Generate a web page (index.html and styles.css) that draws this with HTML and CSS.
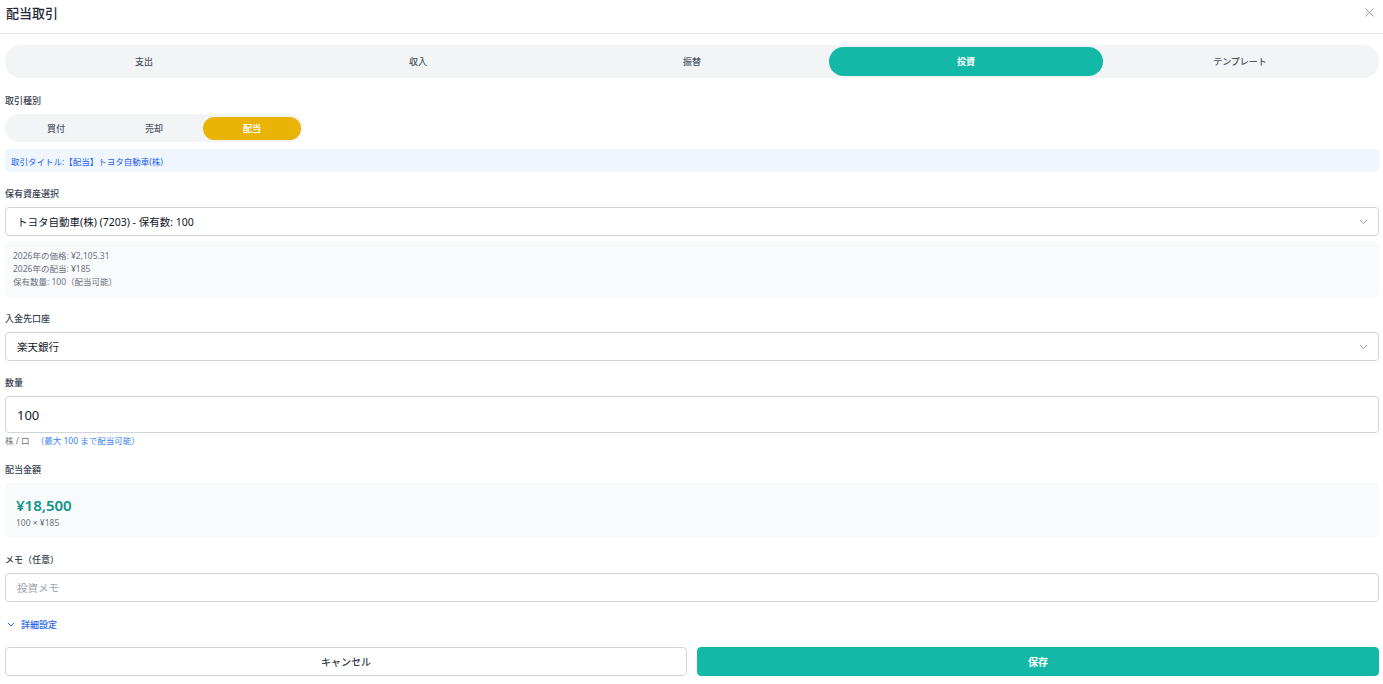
FILE: index.html
```html
<!DOCTYPE html>
<html lang="ja">
<head>
<meta charset="utf-8">
<title>配当取引</title>
<link rel="stylesheet" href="styles.css">
</head>
<body>
<div class="modal">
  <header class="modal-header">
    <h1 class="modal-title">配当取引</h1>
    <button class="close-btn" aria-label="閉じる">
      <svg width="9" height="9" viewBox="0 0 9 9"><path d="M0.5 0.5L8.5 8.5M8.5 0.5L0.5 8.5" stroke="#9ca3af" stroke-width="1" fill="none"/></svg>
    </button>
  </header>
  <div class="body">
    <nav class="tabs">
      <div class="tab">支出</div>
      <div class="tab">収入</div>
      <div class="tab">振替</div>
      <div class="tab active">投資</div>
      <div class="tab">テンプレート</div>
    </nav>

    <div class="field field-first">
      <div class="label">取引種別</div>
      <div class="subtabs">
        <div class="subtab">買付</div>
        <div class="subtab">売却</div>
        <div class="subtab active">配当</div>
      </div>
    </div>

    <div class="title-bar">取引タイトル:【配当】トヨタ自動車(株)</div>

    <div class="field">
      <div class="label">保有資産選択</div>
      <div class="select">
        <span>トヨタ自動車(株) (7203) - 保有数: 100</span>
        <svg class="chev" width="9" height="6" viewBox="0 0 9 6"><path d="M1 1L4.5 4.5L8 1" stroke="#9ca3af" stroke-width="1" fill="none"/></svg>
      </div>
      <div class="info-box">
        <div>2026年の価格: ¥2,105.31</div>
        <div>2026年の配当: ¥185</div>
        <div>保有数量: 100（配当可能）</div>
      </div>
    </div>

    <div class="field">
      <div class="label">入金先口座</div>
      <div class="select">
        <span>楽天銀行</span>
        <svg class="chev" width="9" height="6" viewBox="0 0 9 6"><path d="M1 1L4.5 4.5L8 1" stroke="#9ca3af" stroke-width="1" fill="none"/></svg>
      </div>
    </div>

    <div class="field">
      <div class="label">数量</div>
      <div class="input big">100</div>
      <div class="hint">株 / 口 <span class="hint-blue">（最大 100 まで配当可能）</span></div>
    </div>

    <div class="field">
      <div class="label">配当金額</div>
      <div class="amount-box">
        <div class="amount">¥18,500</div>
        <div class="amount-sub">100 × ¥185</div>
      </div>
    </div>

    <div class="field">
      <div class="label">メモ（任意）</div>
      <div class="input placeholder">投資メモ</div>
    </div>

    <div class="details">
      <svg width="8" height="5" viewBox="0 0 8 5"><path d="M0.8 0.8L4 4L7.2 0.8" stroke="#2563eb" stroke-width="1" fill="none"/></svg>
      <span>詳細設定</span>
    </div>

    <div class="actions">
      <button class="btn btn-cancel">キャンセル</button>
      <button class="btn btn-save">保存</button>
    </div>
  </div>
</div>
</body>
</html>
```

FILE: styles.css
```css
* { box-sizing: border-box; }
html, body { margin: 0; padding: 0; background: #ffffff; }
body {
  font-family: "Noto Sans", "Noto Sans CJK JP", sans-serif;
  color: #374151;
  width: 1383px;
}
.modal { width: 1383px; }
.modal-header {
  height: 34px;
  border-bottom: 1px solid #e5e7eb;
  display: flex;
  align-items: flex-start;
  justify-content: space-between;
  padding: 0 9px 0 6px;
}
.modal-title {
  margin: 4px 0 0 0;
  font-size: 13px;
  line-height: 18px;
  font-weight: 500;
  color: #1f2937;
}
.close-btn {
  background: none;
  border: none;
  padding: 0;
  margin-top: 8px;
  width: 9px;
  height: 9px;
  display: flex;
}
.body { padding: 0 4px 0 5px; }

.tabs {
  margin-top: 11px;
  background: #f3f4f6;
  border-radius: 17px;
  padding: 2px;
  display: grid;
  grid-template-columns: repeat(5, 1fr);
  height: 33px;
}
.tab {
  display: flex;
  align-items: center;
  justify-content: center;
  font-size: 9px;
  font-weight: 500;
  color: #4b5563;
  border-radius: 15px;
}
.tab.active { background: #14b8a6; color: #ffffff; font-weight: 700; }

.field { margin-top: 15px; }
.field-first { margin-top: 16px; }
.label {
  font-size: 9px;
  line-height: 14px;
  font-weight: 500;
  color: #374151;
  margin-bottom: 6px;
}
.subtabs {
  width: 298px;
  height: 28px;
  background: #f3f4f6;
  border-radius: 14px;
  padding: 3px 2px 2px 2px;
  display: grid;
  grid-template-columns: repeat(3, 1fr);
}
.subtab {
  display: flex;
  align-items: center;
  justify-content: center;
  font-size: 9px;
  font-weight: 500;
  color: #4b5563;
  border-radius: 12px;
}
.subtab.active { background: #eab308; color: #ffffff; font-weight: 700; }

.title-bar {
  margin-top: 7px;
  height: 23px;
  background: #eff6ff;
  border-radius: 4px;
  padding: 0 6px;
  display: flex;
  align-items: center;
  font-size: 8.5px;
  color: #2563eb;
}

.select {
  height: 29px;
  border: 1px solid #d1d5db;
  border-radius: 4px;
  display: flex;
  align-items: center;
  justify-content: space-between;
  padding: 0 10px 0 11px;
  font-size: 10.5px;
  color: #111827;
}
.chev { flex: none; }
.info-box {
  margin-top: 5px;
  background: #f9fafb;
  border-radius: 6px;
  padding: 8px 8px 9px 8px;
  font-size: 8.5px;
  line-height: 13px;
  color: #6b7280;
}

.input {
  height: 29px;
  border: 1px solid #d1d5db;
  border-radius: 4px;
  display: flex;
  align-items: center;
  padding: 0 11px;
  font-size: 10.5px;
  color: #111827;
}
.input.big { height: 37px; font-size: 13px; }
.input.placeholder { color: #9ca3af; }
.hint {
  margin-top: 1px;
  font-size: 8.5px;
  line-height: 14px;
  color: #6b7280;
}
.hint-blue { color: #3b82f6; margin-left: 4px; }

.amount-box {
  background: #f9fafb;
  border-radius: 6px;
  height: 55px;
  padding: 11px 11px 0 11px;
}
.amount {
  font-size: 15px;
  line-height: 22px;
  font-weight: 600;
  color: #0d9488;
}
.amount-sub {
  font-size: 8.5px;
  line-height: 13px;
  color: #6b7280;
}

.details {
  margin-top: 15px;
  height: 14px;
  display: flex;
  align-items: center;
  gap: 6px;
  padding-left: 2px;
  font-size: 9px;
  font-weight: 500;
  color: #2563eb;
}

.actions {
  margin-top: 16px;
  display: grid;
  grid-template-columns: 1fr 1fr;
  gap: 10px;
}
.btn {
  height: 29px;
  border-radius: 4px;
  font-family: inherit;
  font-size: 10px;
  font-weight: 500;
  display: flex;
  align-items: center;
  justify-content: center;
  padding: 0;
}
.btn-cancel { background: #ffffff; border: 1px solid #d1d5db; color: #374151; }
.btn-save { background: #14b8a6; border: 1px solid #14b8a6; color: #ffffff; font-weight: 700; }
```
